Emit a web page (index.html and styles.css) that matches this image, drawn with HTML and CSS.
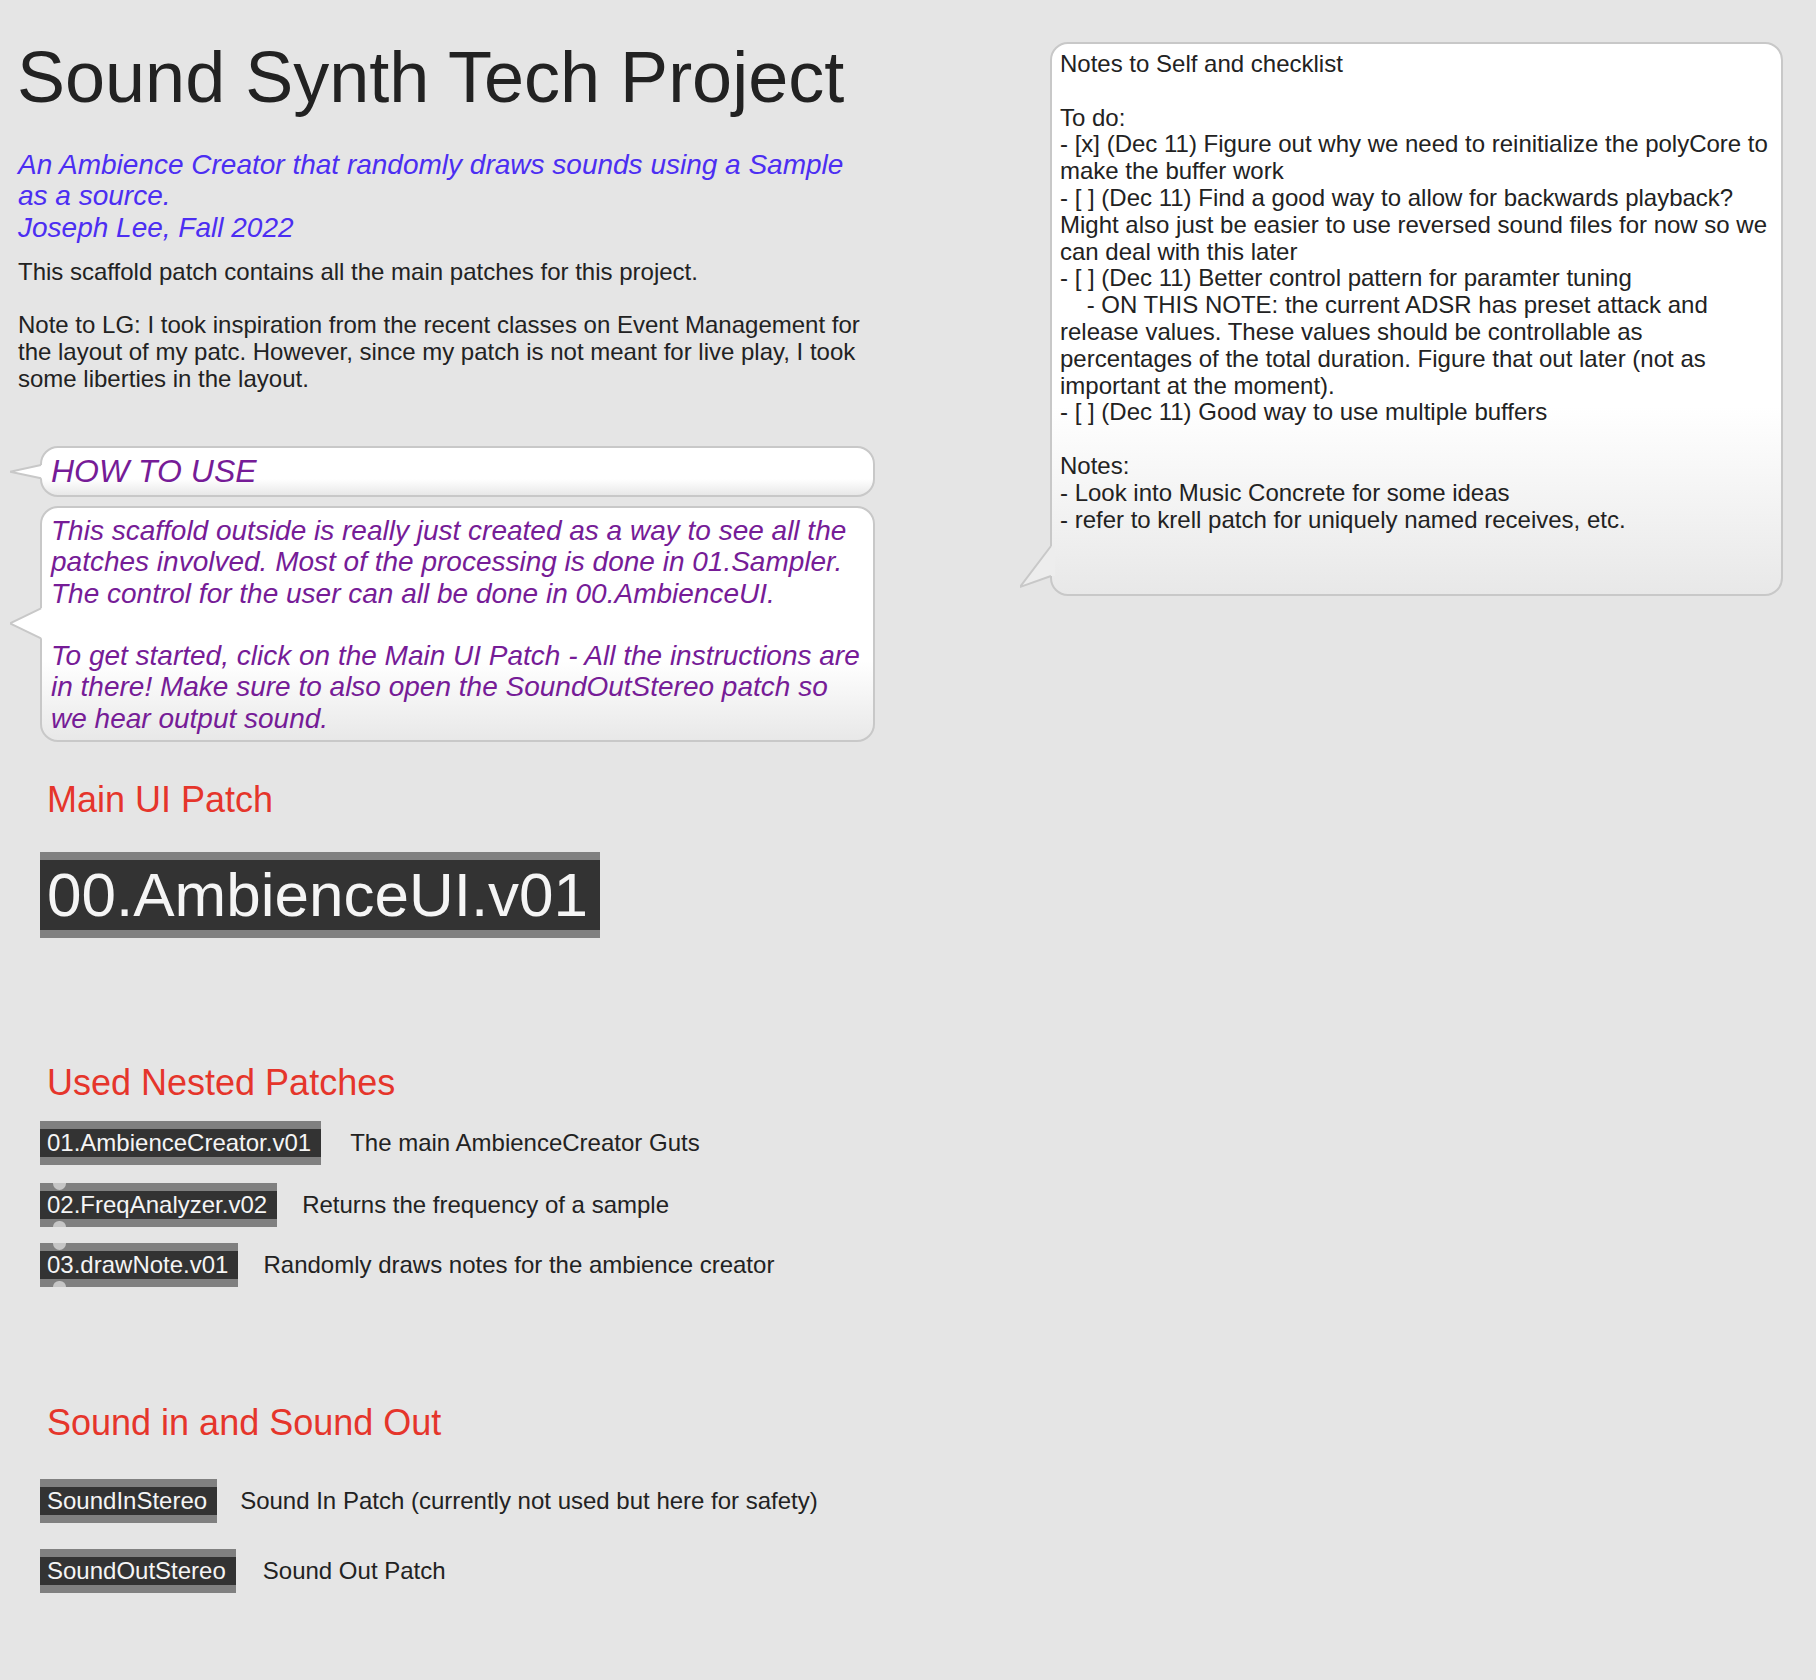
FILE: index.html
```html
<!DOCTYPE html>
<html lang="en">
<head>
<meta charset="utf-8">
<title>Sound Synth Tech Project</title>
<link rel="stylesheet" href="styles.css">
</head>
<body>
<div class="patcher">
  <main class="col-main">
    <h1 class="title">Sound Synth Tech Project</h1>
    <p class="subtitle">An Ambience Creator that randomly draws sounds using a Sample<br>as a source.<br>Joseph Lee, Fall 2022</p>
    <p class="intro">This scaffold patch contains all the main patches for this project.<br><br>Note to LG: I took inspiration from the recent classes on Event Management for<br>the layout of my patc. However, since my patch is not meant for live play, I took<br>some liberties in the layout.</p>

    <div class="bubble bubble--title">
      <svg class="tail tail--title" width="35" height="24" viewBox="0 0 35 24" aria-hidden="true">
        <polygon points="0,11.7 31,5 35,5 35,18.3 31,18.3" fill="#ffffff"/>
        <polyline points="31,5 0,11.7 31,18.3" fill="none" stroke="#c8c8c8" stroke-width="2"/>
      </svg>
      <p class="howto-title">HOW TO USE</p>
    </div>
    <div class="bubble bubble--body">
      <svg class="tail tail--body" width="35" height="45" viewBox="0 0 35 45" aria-hidden="true">
        <polygon points="0,22.3 31,7.3 35,7.3 35,37.3 31,37.3" fill="#ffffff"/>
        <polyline points="31,7.3 0,22.3 31,37.3" fill="none" stroke="#c8c8c8" stroke-width="2"/>
      </svg>
      <p class="howto-text">This scaffold outside is really just created as a way to see all the<br>patches involved. Most of the processing is done in 01.Sampler.<br>The control for the user can all be done in 00.AmbienceUI.<br><br>To get started, click on the Main UI Patch - All the instructions are<br>in there! Make sure to also open the SoundOutStereo patch so<br>we hear output sound.</p>
    </div>

    <h2 class="section-title section-title--main">Main UI Patch</h2>
    <div class="patch patch--large">00.AmbienceUI.v01</div>

    <h2 class="section-title section-title--nested">Used Nested Patches</h2>
    <div class="row row--first row--gap-wide">
      <div class="patch">01.AmbienceCreator.v01</div>
      <span class="desc">The main AmbienceCreator Guts</span>
    </div>
    <div class="row row--second">
      <div class="patch patch--io">02.FreqAnalyzer.v02</div>
      <span class="desc">Returns the frequency of a sample</span>
    </div>
    <div class="row row--third">
      <div class="patch patch--io">03.drawNote.v01</div>
      <span class="desc">Randomly draws notes for the ambience creator</span>
    </div>

    <h2 class="section-title section-title--sound">Sound in and Sound Out</h2>
    <div class="row row--sin row--gap-narrow">
      <div class="patch">SoundInStereo</div>
      <span class="desc">Sound In Patch (currently not used but here for safety)</span>
    </div>
    <div class="row row--sout row--gap-mid">
      <div class="patch">SoundOutStereo</div>
      <span class="desc">Sound Out Patch</span>
    </div>
  </main>

  <aside class="col-side">
    <div class="bubble bubble--notes">
      <svg class="tail tail--notes" width="35" height="56" viewBox="0 0 35 56" aria-hidden="true">
        <polygon points="0,50 31,9 35,9 35,39 31,39" fill="#ededed"/>
        <polyline points="31,9 0,50 31,39" fill="none" stroke="#c8c8c8" stroke-width="2"/>
      </svg>
      <p class="notes-text">Notes to Self and checklist

To do:
- [x] (Dec 11) Figure out why we need to reinitialize the polyCore to
make the buffer work
- [ ] (Dec 11) Find a good way to allow for backwards playback?
Might also just be easier to use reversed sound files for now so we
can deal with this later
- [ ] (Dec 11) Better control pattern for paramter tuning
    - ON THIS NOTE: the current ADSR has preset attack and
release values. These values should be controllable as
percentages of the total duration. Figure that out later (not as
important at the moment).
- [ ] (Dec 11) Good way to use multiple buffers

Notes:
- Look into Music Concrete for some ideas
- refer to krell patch for uniquely named receives, etc.</p>
    </div>
  </aside>
</div>
</body>
</html>
```

FILE: styles.css
```css
* {
  box-sizing: border-box;
}

html,
body {
  margin: 0;
  padding: 0;
}

body {
  background: #e5e5e5;
  color: #222222;
  font-family: "Liberation Sans", Arial, Helvetica, sans-serif;
}

h1,
h2,
p {
  margin: 0;
  font-weight: 400;
}

.patcher {
  display: flex;
  align-items: flex-start;
  width: 1816px;
  min-height: 1680px;
}

/* ---------- left column ---------- */

.col-main {
  width: 900px;
  flex: none;
  display: flex;
  flex-direction: column;
  align-items: flex-start;
  padding-bottom: 60px;
}

.title {
  margin: 36.6px 0 0 17px;
  font-size: 72px;
  line-height: 1.117;
  color: #222222;
  white-space: nowrap;
}

.subtitle {
  margin: 32px 0 0 18px;
  font-size: 28px;
  line-height: 1.117;
  font-style: italic;
  color: #4c2ef2;
  white-space: nowrap;
}

.intro {
  margin: 16px 0 0 18px;
  font-size: 24px;
  line-height: 1.117;
  color: #222222;
  white-space: nowrap;
}

/* ---------- comment bubbles ---------- */

.bubble {
  position: relative;
  border: 2px solid #c8c8c8;
  border-radius: 18px;
  background: linear-gradient(to bottom, #ffffff 0%, #ffffff 66%, #e8e8e8 100%);
  padding: 6px 6px 6px 9px;
}

.bubble--title {
  margin: 53.2px 0 0 40px;
  width: 835px;
  height: 51px;
  padding-top: 6px;
}

.bubble--body {
  margin: 9px 0 0 40px;
  width: 835px;
  height: 236px;
  padding-top: 7px;
}

.bubble--notes {
  width: 733px;
  height: 554px;
  padding: 7px 6px 6px 8px;
}

.tail {
  position: absolute;
  left: -32px;
  display: block;
}

.tail--title {
  top: 12px;
}

.tail--body {
  top: 93px;
}

.tail--notes {
  top: 493px;
}

.howto-title {
  font-size: 32px;
  line-height: 1.117;
  font-style: italic;
  color: #761c97;
  white-space: nowrap;
}

.howto-text {
  font-size: 28px;
  line-height: 1.117;
  font-style: italic;
  color: #761c97;
  white-space: nowrap;
}

.notes-text {
  font-size: 24px;
  line-height: 1.117;
  color: #222222;
  white-space: pre;
}

/* ---------- right column ---------- */

.col-side {
  flex: none;
  margin-left: 150px;
  padding-top: 42px;
}

/* ---------- section headings ---------- */

.section-title {
  margin-left: 47px;
  font-size: 36px;
  line-height: 1.117;
  color: #e5352b;
  white-space: nowrap;
}

.section-title--main {
  margin-top: 38px;
}

.section-title--nested {
  margin-top: 124.7px;
}

.section-title--sound {
  margin-top: 115.8px;
}

/* ---------- patch (subpatcher) boxes ---------- */

.patch {
  position: relative;
  flex: none;
  background: #333333;
  border-top: 8px solid #808080;
  border-bottom: 8px solid #808080;
  color: #f5f5f5;
  font-size: 24px;
  line-height: 28px;
  padding: 0 10px 0 7px;
  white-space: nowrap;
}

.patch--large {
  margin: 31.8px 0 0 40px;
  font-size: 62px;
  line-height: 70px;
  padding: 0 12px 0 7px;
}

.patch--io::before,
.patch--io::after {
  content: "";
  position: absolute;
  left: 12.7px;
  width: 13.4px;
  height: 6.7px;
  background: #c6c6c6;
}

.patch--io::before {
  top: -8px;
  border-radius: 0 0 7px 7px;
}

.patch--io::after {
  bottom: -8px;
  border-radius: 7px 7px 0 0;
}

.row {
  display: flex;
  align-items: center;
  gap: 25px;
  margin-left: 40px;
}

.row--gap-wide {
  gap: 29px;
}

.row--gap-narrow {
  gap: 23px;
}

.row--gap-mid {
  gap: 27px;
}

.row--first {
  margin-top: 18.4px;
}

.row--second {
  margin-top: 18px;
}

.row--third {
  margin-top: 16px;
}

.row--sin {
  margin-top: 36px;
}

.row--sout {
  margin-top: 26px;
}

.desc {
  font-size: 24px;
  line-height: 1.117;
  color: #222222;
  white-space: nowrap;
}
```
